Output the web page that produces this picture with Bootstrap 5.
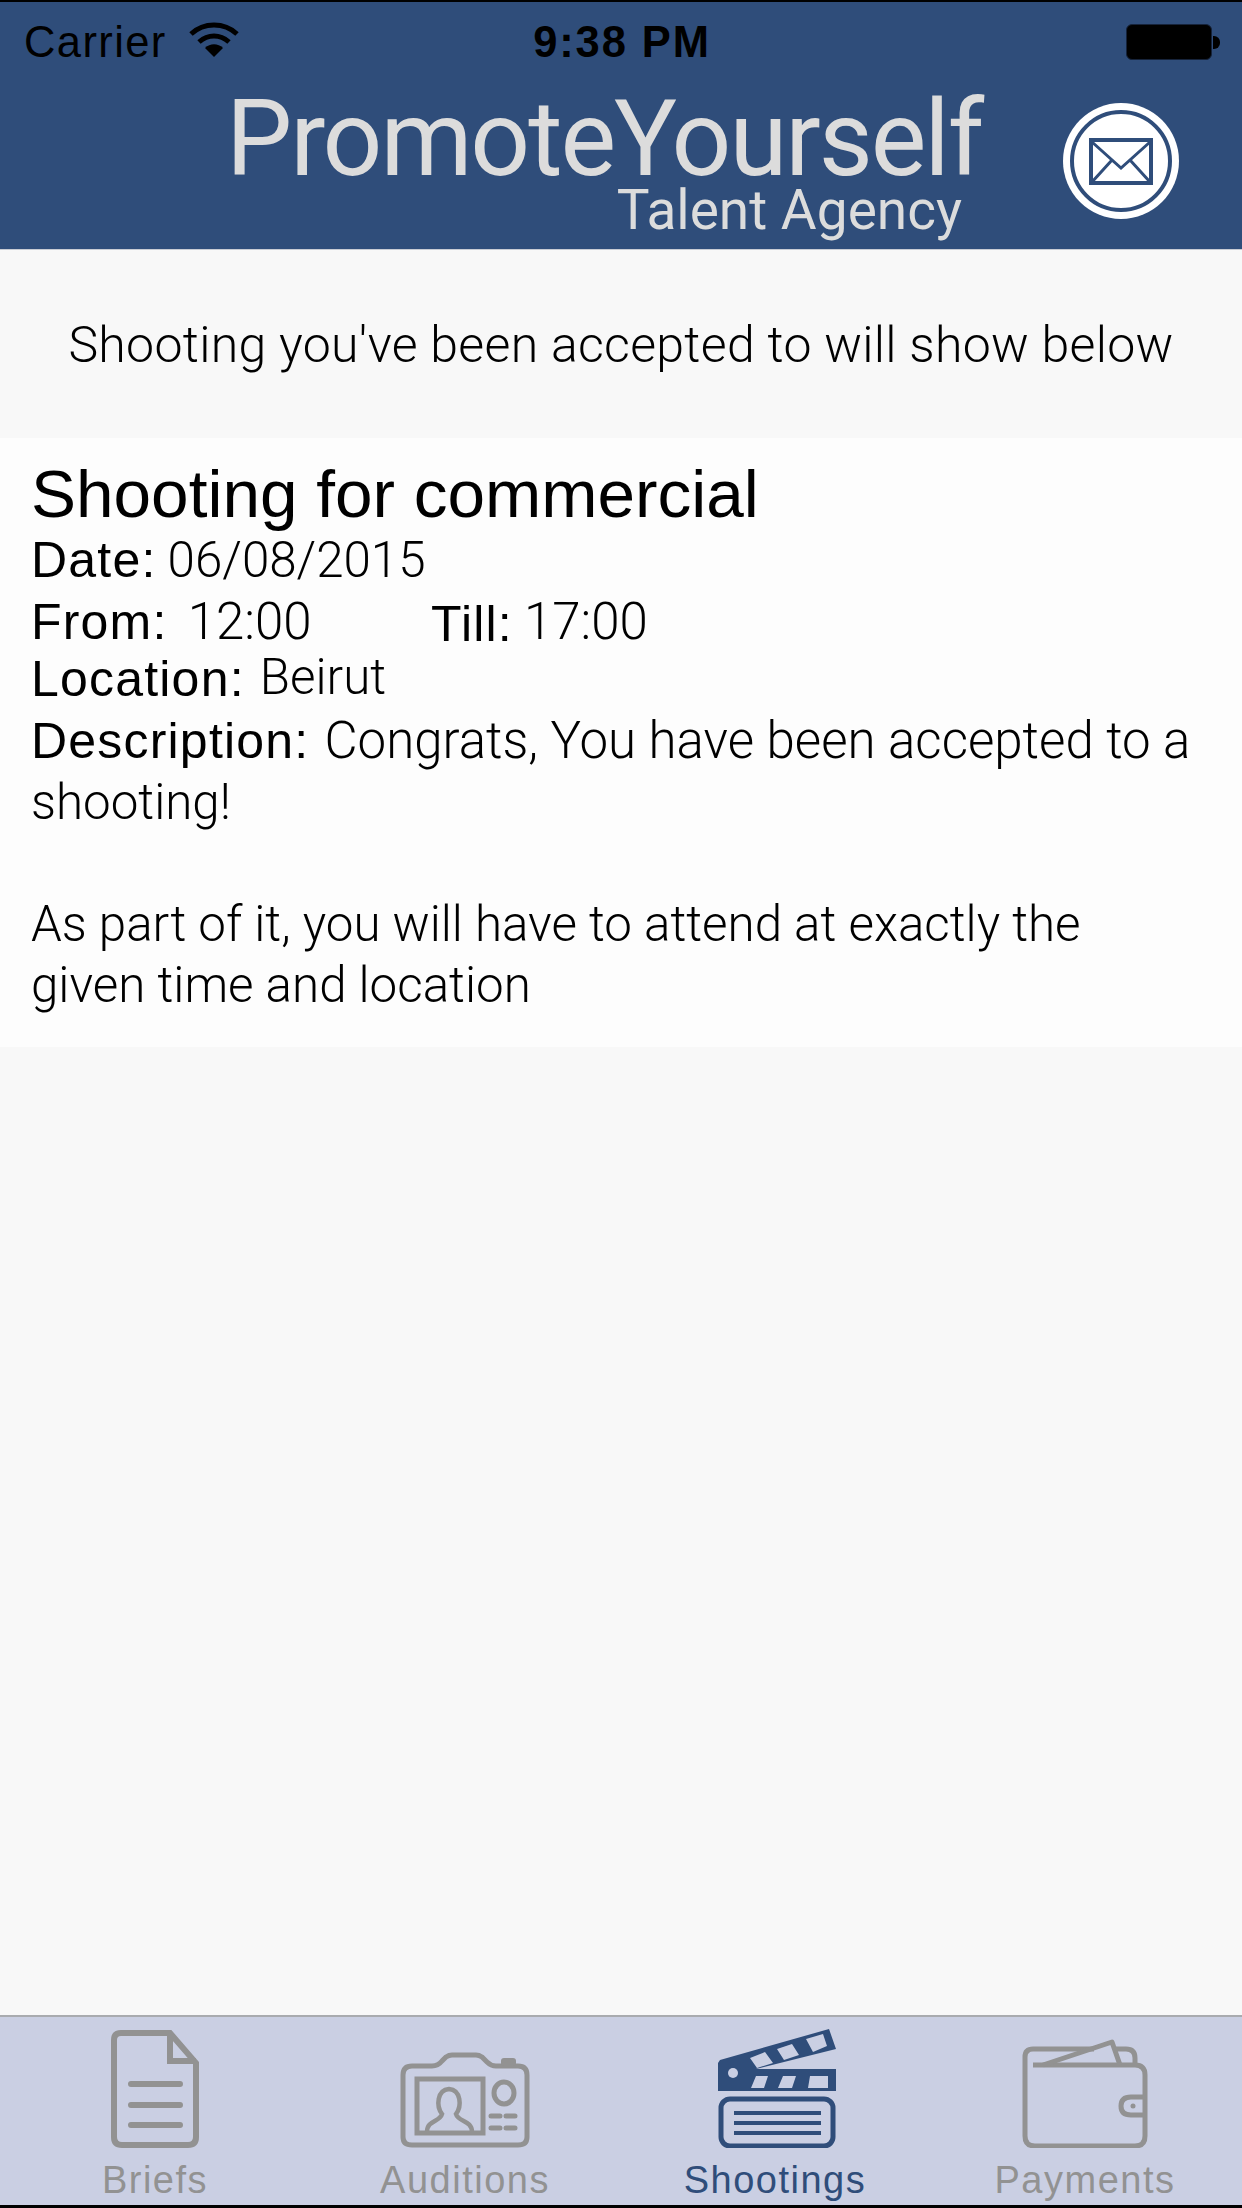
<!DOCTYPE html>
<html lang="en">
<head>
  <meta charset="UTF-8" />
  <meta name="viewport" content="width=device-width, initial-scale=1.0" />
  <title>Shootings</title>
  <link href="https://cdn.jsdelivr.net/npm/bootstrap@5.3.0/dist/css/bootstrap.min.css" rel="stylesheet" />
  <style>
    html, body { height: 100%; }
    body { background-color: #f8f8f8; font-family: "Liberation Sans", Arial, sans-serif; color: #000; overflow: hidden; }
    .app-shell { height: 2208px; width: 1242px; }
    .top-head { background-color: #2f4d7a; border-top: 2px solid #000; height: 250px; border-bottom: 1px solid #c9ccd4; }
    .status-row { height: 80px; padding: 0 22px 0 24px; font-size: 43.5px; line-height: 62px; }
    .carrier-txt { letter-spacing: 1.4px; }
    .wifi-ico { margin-left: 22px; }
    .clock-txt { font-weight: 700; letter-spacing: 1.9px; width: 200px; text-align: center; white-space: nowrap; }
    .status-side { width: 300px; }
    .battery-body { width: 86px; height: 36px; background: #000; border: 1px solid #16233a; border-radius: 6px; }
    .battery-nub { width: 7px; height: 13px; background: #000; border-radius: 0 6px 6px 0; margin-left: 1px; }
    .logo-row { height: 167px; }
    .logo-box { margin-left: 226px; width: 760px; color: #dcdcdc; font-family: Roboto, sans-serif; font-weight: 400; }
    .logo-main { font-size: 105px; line-height: 100px; padding-top: 8px; letter-spacing: -2.1px; white-space: nowrap; }
    .logo-sub { font-size: 55px; line-height: 56px; text-align: right; padding-right: 24px; white-space: nowrap; margin-top: -8px; }
    .mail-btn { width: 116px; height: 116px; margin-left: 77px; margin-top: -10px; }
    .info-strip { height: 188px; padding-top: 3px; font-family: Roboto, sans-serif; font-weight: 300; font-size: 50px; letter-spacing: .3px; }
    .shoot-item { height: 609px; background: #fdfdfd; padding: 20px 44px 0 31px; font-size: 50px; line-height: 61px; letter-spacing: 1.2px; }
    .shoot-title { font-size: 67.5px; line-height: 72px; margin: 0; font-weight: 400; letter-spacing: 0; }
    .fact-line { height: 61px; margin: 0; white-space: nowrap; }
    .fact-line.is-short { height: 58px; line-height: 51px; }
    .fact-val { font-family: Roboto, sans-serif; font-weight: 300; font-size: 51px; letter-spacing: 0; }
    .fact-val.is-tight { font-size: 49.3px; }
    .fact-val.is-raised { vertical-align: 2px; }
    .date-val { margin-left: -4px; }
    .from-val { margin-left: 5px; }
    .from-slot { width: 400px; }
    .desc-txt { margin: 0; }
    .tab-strip { height: 193px; margin-top: auto; background: #cacfe3; border-top: 2px solid #a9abaf; border-bottom: 3px solid #000; }
    .tab-cell { width: 310px; height: 188px; color: #929292; font-size: 38px; line-height: 48px; letter-spacing: 1.5px; }
    .tab-cell.is-on { color: #2f4d7a; }
    .tab-art { height: 131px; }
    .clap-ico { margin-left: 4px; }
  </style>
</head>
<body>
  <div class="app-shell d-flex flex-column">
    <header class="top-head">
      <div class="status-row d-flex align-items-center justify-content-between">
        <div class="status-side d-flex align-items-center">
          <span class="carrier-txt">Carrier</span>
          <svg class="wifi-ico mb-1" width="50" height="36" viewBox="0 0 50 36"><path d="M2 12C15 0 35 0 48 12M10 20C19 12 31 12 40 20" fill="none" stroke="#000" stroke-width="5"/><path d="M16 26C21 21 29 21 34 26L25 35Z" fill="#000"/></svg>
        </div>
        <span class="clock-txt">9:38 PM</span>
        <div class="status-side d-flex align-items-center justify-content-end">
          <div class="battery-body"></div>
          <div class="battery-nub"></div>
        </div>
      </div>
      <div class="logo-row d-flex align-items-center">
        <div class="logo-box align-self-start">
          <div class="logo-main">PromoteYourself</div>
          <div class="logo-sub">Talent Agency</div>
        </div>
        <svg class="mail-btn" viewBox="0 0 116 116">
          <circle cx="58" cy="58" r="58" fill="#fff"/>
          <circle cx="58" cy="58" r="49" fill="none" stroke="#2f4d7a" stroke-width="4"/>
          <rect x="28" y="37" width="60" height="43" fill="none" stroke="#2f4d7a" stroke-width="4"/>
          <path d="M29 39L58 65L87 39M29 79L49 57M87 79L67 57" fill="none" stroke="#2f4d7a" stroke-width="3"/>
        </svg>
      </div>
    </header>

    <div class="info-strip d-flex align-items-center justify-content-center">Shooting you've been accepted to will show below</div>

    <section class="shoot-item">
      <h1 class="shoot-title">Shooting for commercial</h1>
      <p class="fact-line">Date: <span class="fact-val is-tight date-val">06/08/2015</span></p>
      <p class="fact-line d-flex"><span class="from-slot">From: <span class="fact-val from-val">12:00</span></span><span>Till: <span class="fact-val is-raised date-val">17:00</span></span></p>
      <p class="fact-line is-short">Location: <span class="fact-val is-tight is-raised">Beirut</span></p>
      <p class="desc-txt">Description: <span class="fact-val">Congrats, You have been accepted to a</span> <span class="fact-val is-tight">shooting!<br><br>As part of it, you will have to attend at exactly the given time and location</span></p>
    </section>

    <nav class="tab-strip d-flex px-0">
      <div class="tab-cell d-flex flex-column align-items-center">
        <div class="tab-art d-flex align-items-end">
          <svg width="88" height="118" viewBox="0 0 88 118" fill="none" stroke="#929292" stroke-width="6">
            <path d="M10 3H59L85 33V107Q85 115 77 115H11Q3 115 3 107V10Q3 3 10 3Z"/>
            <path d="M59 3V31H85"/>
            <path d="M20 54H69M20 75H69M20 95H69" stroke-linecap="round"/>
          </svg>
        </div>
        <span class="mt-2">Briefs</span>
      </div>
      <div class="tab-cell d-flex flex-column align-items-center">
        <div class="tab-art d-flex align-items-end">
          <svg width="130" height="96" viewBox="0 0 130 96" fill="none" stroke="#929292" stroke-width="5">
            <path d="M12 14H32Q38 14 42 9L46 5Q49 3 52 3H76Q79 3 82 5L87 10Q91 14 96 14H118Q127 14 127 23V85Q127 93 118 93H12Q3 93 3 85V23Q3 14 12 14Z"/>
            <rect x="101" y="6" width="15" height="8" rx="3" fill="#929292" stroke="none"/>
            <rect x="17" y="27" width="66" height="54"/>
            <ellipse cx="104" cy="41" rx="10" ry="11"/>
            <path d="M91 64H100M106 64H115M91 76H100M106 76H115" stroke-linecap="round"/>
            <path d="M27 80C27 68 40 70 42 62C36 54 37 38 49 37C61 38 62 54 56 62C58 70 72 68 72 80" stroke-width="4.5"/>
          </svg>
        </div>
        <span class="mt-2">Auditions</span>
      </div>
      <div class="tab-cell is-on d-flex flex-column align-items-center">
        <div class="tab-art d-flex align-items-end">
          <svg class="clap-ico" width="118" height="119" viewBox="0 0 118 119">
            <path d="M2 31L111 0L118 20L38 40H118V62H0V34Z" fill="#2f4d7a"/>
            <circle cx="15" cy="44" r="5" fill="#cacfe3"/>
            <path d="M32 29L47 23L55 34L39 39ZM59 20L74 15L81 26L66 31ZM88 10L105 5L109 17L95 23Z" fill="#cacfe3"/>
            <path d="M38 47H50L46 59H33ZM65 47H78L74 59H60ZM92 47H110V59H90Z" fill="#cacfe3"/>
            <rect x="3" y="70" width="112" height="47" rx="9" fill="none" stroke="#2f4d7a" stroke-width="5"/>
            <path d="M16 84H103M16 94H103M16 104H103" stroke="#2f4d7a" stroke-width="4"/>
          </svg>
        </div>
        <span class="mt-2">Shootings</span>
      </div>
      <div class="tab-cell d-flex flex-column align-items-center">
        <div class="tab-art d-flex align-items-end">
          <svg width="126" height="109" viewBox="0 0 126 109" fill="none" stroke="#929292" stroke-width="5">
            <path d="M11 26H113Q123 26 123 36V97Q123 107 113 107H13Q3 107 3 97V18Q3 10 11 10H72"/>
            <path d="M21 26L90 3L98 26" stroke-linejoin="round"/>
            <path d="M92 10H104Q113 10 113 19V26"/>
            <path d="M123 58H109Q99 58 99 67Q99 76 109 76H123"/>
            <circle cx="111" cy="67" r="2.5" fill="#929292" stroke="none"/>
          </svg>
        </div>
        <span class="mt-2">Payments</span>
      </div>
    </nav>
  </div>
  <script src="https://cdn.jsdelivr.net/npm/bootstrap@5.3.0/dist/js/bootstrap.bundle.min.js"></script>
</body>
</html>
